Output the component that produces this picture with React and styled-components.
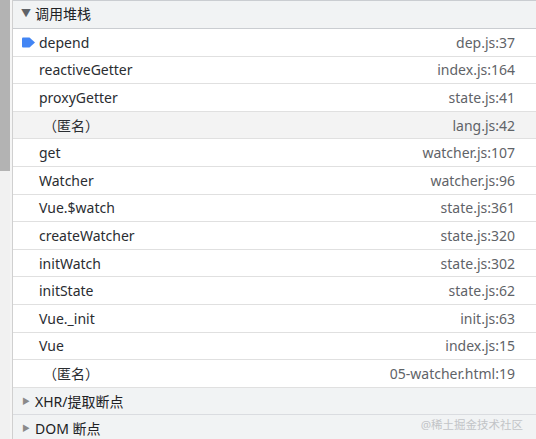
import React from 'react'
import styled, { createGlobalStyle } from 'styled-components'

const Global = createGlobalStyle`
  html, body { margin: 0; padding: 0; background: #fff; }
  body {
    font-family: "Noto Sans", "Noto Sans CJK SC", sans-serif;
    color: #303942;
  }
`

const Page = styled.div`
  display: flex;
  width: 536px;
  height: 439px;
  overflow: hidden;
  background: #fff;
`

const Track = styled.div`
  width: 10px;
  flex: none;
  background: #f1f1f1;
  display: flex;
  flex-direction: column;
`

const Thumb = styled.div`
  height: 171px;
  background: #b3b3b3;
`

const Gutter = styled.div`
  width: 2px;
  flex: none;
  background: #f5f5f5;
  border-right: 1px solid #d0d0d0;
`

const Pane = styled.div`
  flex: 1;
  display: flex;
  flex-direction: column;
  min-width: 0;
`

const Section = styled.div`
  flex: none;
  display: flex;
  align-items: center;
  height: ${p => (p.$first ? '23px' : '26px')};
  padding: ${p => (p.$first ? '0 0 4px 8px' : '0 0 0 8px')};
  background: #f1f3f4;
  border-top: ${p => (p.$first ? '1px solid #cacdd1' : 'none')};
  border-bottom: 1px solid ${p => (p.$first ? '#cacdd1' : '#dadce0')};
  font-size: 14px;
  color: #202124;
  position: relative;
`

const Caret = styled.span`
  width: 10px;
  margin-right: 4px;
  display: flex;
  justify-content: center;
  color: ${p => (p.$open ? '#5f6368' : '#8a8a8a')};
  font-size: ${p => (p.$open ? '10px' : '8px')};
`

const Row = styled.div`
  flex: none;
  display: flex;
  align-items: center;
  height: 26.6px;
  border-bottom: 1px solid #e0e0e0;
  background: ${p => (p.$dim ? '#f3f3f3' : '#fff')};
  padding: 0 21px 0 4px;
  font-size: 14px;
`

const Marker = styled.span`
  width: 22px;
  flex: none;
  display: flex;
  align-items: center;
  justify-content: center;
`

const Name = styled.span`
  flex: 1;
  color: #2a2d31;
  white-space: nowrap;
  padding-left: ${p => (p.$anon ? '4px' : '0')};
`

const Loc = styled.span`
  color: #5f6368;
  white-space: nowrap;
`

const Mark = styled.span`
  position: absolute;
  right: 13px;
  top: 1px;
  font-size: 11.5px;
  color: #c2c4c7;
`

const Arrow = () => (
  <svg width="13" height="11" viewBox="0 0 13 11">
    <path d="M0 1.5 Q0 0.5 1 0.5 H7.5 L13 5.5 L7.5 10.5 H1 Q0 10.5 0 9.5 Z" fill="#4285f4" />
  </svg>
)

const frames = [
  { name: 'depend', loc: 'dep.js:37', current: true },
  { name: 'reactiveGetter', loc: 'index.js:164' },
  { name: 'proxyGetter', loc: 'state.js:41' },
  { name: '（匿名）', loc: 'lang.js:42', anon: true, dim: true },
  { name: 'get', loc: 'watcher.js:107' },
  { name: 'Watcher', loc: 'watcher.js:96' },
  { name: 'Vue.$watch', loc: 'state.js:361' },
  { name: 'createWatcher', loc: 'state.js:320' },
  { name: 'initWatch', loc: 'state.js:302' },
  { name: 'initState', loc: 'state.js:62' },
  { name: 'Vue._init', loc: 'init.js:63' },
  { name: 'Vue', loc: 'index.js:15' },
  { name: '（匿名）', loc: '05-watcher.html:19', anon: true },
]

export default function App() {
  return (
    <Page>
      <Global />
      <Track>
        <Thumb />
      </Track>
      <Gutter />
      <Pane>
        <Section $first>
          <Caret $open>▼</Caret>
          调用堆栈
        </Section>
        {frames.map((f, i) => (
          <Row key={i} $dim={f.dim}>
            <Marker>{f.current && <Arrow />}</Marker>
            <Name $anon={f.anon}>{f.name}</Name>
            <Loc>{f.loc}</Loc>
          </Row>
        ))}
        <Section>
          <Caret>▶</Caret>
          XHR/提取断点
        </Section>
        <Section>
          <Caret>▶</Caret>
          DOM 断点
          <Mark>@稀土掘金技术社区</Mark>
        </Section>
      </Pane>
    </Page>
  )
}
